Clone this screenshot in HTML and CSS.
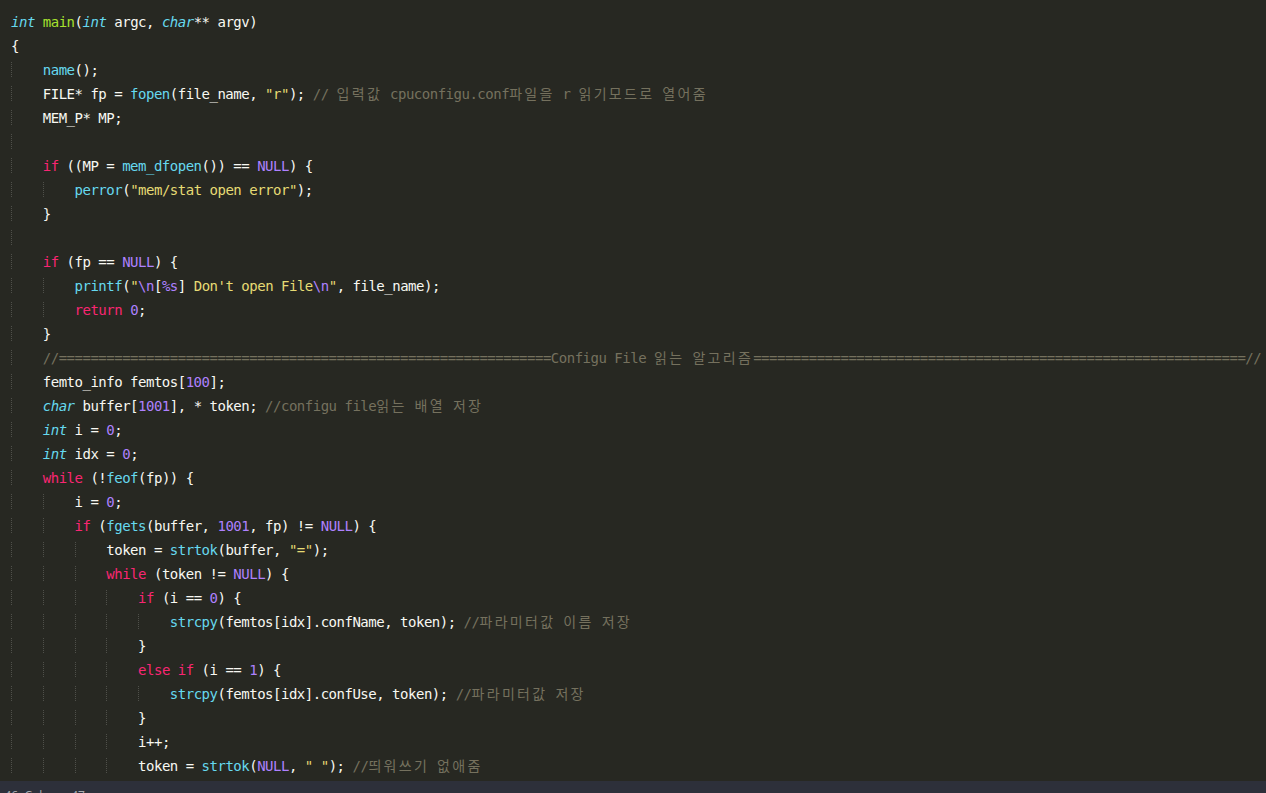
FILE: index.html
```html
<!DOCTYPE html>
<html lang="ko">
<head>
<meta charset="utf-8">
<title>main.c</title>
<link rel="stylesheet" href="styles.css">
</head>
<body>
<div class="editor">
<div class="line"><span class="t">int</span> <span class="e">main</span>(<span class="t">int</span> argc, <span class="t">char</span>** argv)</div>
<div class="line">{</div>
<div class="line"><span class="g">    </span><span class="f">name</span>();</div>
<div class="line"><span class="g">    </span>FILE* fp = <span class="f">fopen</span>(file_name, <span class="s">"r"</span>); <span class="c">// <span class="ko">입력값</span> cpuconfigu.conf<span class="ko">파일을</span> r <span class="ko">읽기모드로</span> <span class="ko">열어줌</span></span></div>
<div class="line"><span class="g">    </span>MEM_P* MP;</div>
<div class="line"><span class="g">    </span></div>
<div class="line"><span class="g">    </span><span class="k">if</span> ((MP = <span class="f">mem_dfopen</span>()) == <span class="n">NULL</span>) {</div>
<div class="line"><span class="g">    </span><span class="g">    </span><span class="f">perror</span>(<span class="s">"mem/stat open error"</span>);</div>
<div class="line"><span class="g">    </span>}</div>
<div class="line"><span class="g">    </span></div>
<div class="line"><span class="g">    </span><span class="k">if</span> (fp == <span class="n">NULL</span>) {</div>
<div class="line"><span class="g">    </span><span class="g">    </span><span class="f">printf</span>(<span class="s">"<span class="n">\n</span><span class="p">[</span><span class="n">%s</span><span class="p">]</span> Don't open File<span class="n">\n</span>"</span>, file_name);</div>
<div class="line"><span class="g">    </span><span class="g">    </span><span class="k">return</span> <span class="n">0</span>;</div>
<div class="line"><span class="g">    </span>}</div>
<div class="line"><span class="g">    </span><span class="c">//==============================================================Configu File <span class="ko">읽는</span> <span class="ko">알고리즘</span>==============================================================//</span></div>
<div class="line"><span class="g">    </span>femto_info femtos[<span class="n">100</span>];</div>
<div class="line"><span class="g">    </span><span class="t">char</span> buffer[<span class="n">1001</span>], * token; <span class="c">//configu file<span class="ko">읽는</span> <span class="ko">배열</span> <span class="ko">저장</span></span></div>
<div class="line"><span class="g">    </span><span class="t">int</span> i = <span class="n">0</span>;</div>
<div class="line"><span class="g">    </span><span class="t">int</span> idx = <span class="n">0</span>;</div>
<div class="line"><span class="g">    </span><span class="k">while</span> (!<span class="f">feof</span>(fp)) {</div>
<div class="line"><span class="g">    </span><span class="g">    </span>i = <span class="n">0</span>;</div>
<div class="line"><span class="g">    </span><span class="g">    </span><span class="k">if</span> (<span class="f">fgets</span>(buffer, <span class="n">1001</span>, fp) != <span class="n">NULL</span>) {</div>
<div class="line"><span class="g">    </span><span class="g">    </span><span class="g">    </span>token = <span class="f">strtok</span>(buffer, <span class="s">"="</span>);</div>
<div class="line"><span class="g">    </span><span class="g">    </span><span class="g">    </span><span class="k">while</span> (token != <span class="n">NULL</span>) {</div>
<div class="line"><span class="g">    </span><span class="g">    </span><span class="g">    </span><span class="g">    </span><span class="k">if</span> (i == <span class="n">0</span>) {</div>
<div class="line"><span class="g">    </span><span class="g">    </span><span class="g">    </span><span class="g">    </span><span class="g">    </span><span class="f">strcpy</span>(femtos[idx].confName, token); <span class="c">//<span class="ko">파라미터값</span> <span class="ko">이름</span> <span class="ko">저장</span></span></div>
<div class="line"><span class="g">    </span><span class="g">    </span><span class="g">    </span><span class="g">    </span>}</div>
<div class="line"><span class="g">    </span><span class="g">    </span><span class="g">    </span><span class="g">    </span><span class="k">else</span> <span class="k">if</span> (i == <span class="n">1</span>) {</div>
<div class="line"><span class="g">    </span><span class="g">    </span><span class="g">    </span><span class="g">    </span><span class="g">    </span><span class="f">strcpy</span>(femtos[idx].confUse, token); <span class="c">//<span class="ko">파라미터값</span> <span class="ko">저장</span></span></div>
<div class="line"><span class="g">    </span><span class="g">    </span><span class="g">    </span><span class="g">    </span>}</div>
<div class="line"><span class="g">    </span><span class="g">    </span><span class="g">    </span><span class="g">    </span>i++;</div>
<div class="line"><span class="g">    </span><span class="g">    </span><span class="g">    </span><span class="g">    </span>token = <span class="f">strtok</span>(<span class="n">NULL</span>, <span class="s">" "</span>); <span class="c">//<span class="ko">띄워쓰기</span> <span class="ko">없애줌</span></span></div>
<div class="line"><span class="g">    </span><span class="g">    </span><span class="g">    </span>}</div>
</div>
<div class="status"><span class="pos">Line 46, Column 47</span></div>
</body>
</html>
```

FILE: styles.css
```css
html, body {
  margin: 0;
  padding: 0;
  background: #272822;
  overflow: hidden;
  height: 793px;
}

.editor {
  height: 781px;
  overflow: hidden;
  box-sizing: border-box;
  padding: 10px 0 0 11px;
  background: #272822;
  color: #f8f8f2;
  font-family: "DejaVu Sans Mono", "Noto Sans CJK KR", monospace;
  font-size: 14px;
  letter-spacing: -0.49px;
}

.line {
  height: 24px;
  line-height: 24px;
  white-space: pre;
}

.g {
  background-image: repeating-linear-gradient(to bottom, #4f504a 0 1px, transparent 1px 2px);
  background-size: 1px 100%;
  background-repeat: no-repeat;
  background-position: 0 0;
}

.k { color: #f92672; }
.s { color: #e6db74; }
.n { color: #ae81ff; }
.p { color: #f8f8f2; }
.f { color: #66d9ef; }
.t { color: #66d9ef; font-style: italic; }
.e { color: #a6e22e; }
.c { color: #75715e; }
.ko { letter-spacing: 2.3px; }

.status {
  height: 22px;
  background: #2d303a;
  color: #a9abb0;
  font-family: "Open Sans", "Noto Sans", sans-serif;
  font-size: 12px;
  line-height: 22px;
  white-space: nowrap;
  overflow: hidden;
}

.pos {
  display: inline-block;
  margin-left: -22px;
  padding-top: 4px;
}
```
